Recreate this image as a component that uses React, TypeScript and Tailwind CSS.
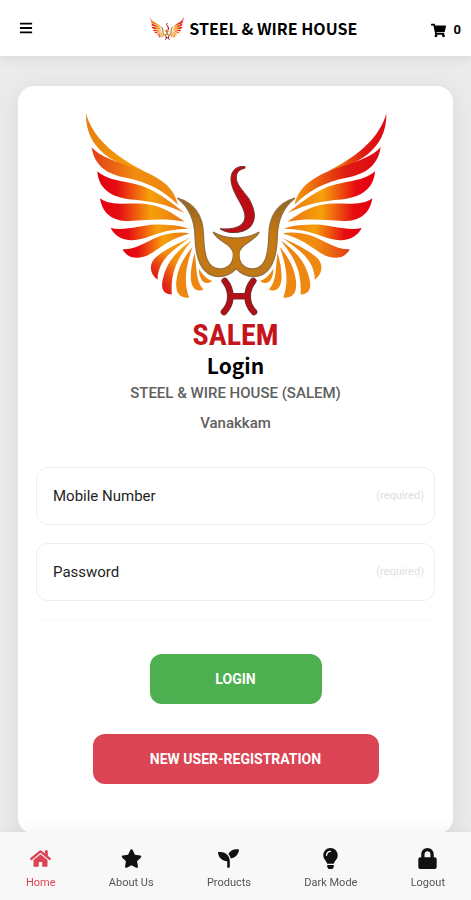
import React, { useId, useState } from 'react';
import { FaBars, FaHome, FaLightbulb, FaLock, FaSeedling, FaShoppingCart, FaStar } from 'react-icons/fa';

const feathers = [
  { d: 'M30 28 C48 95 105 152 207 203 C120 184 28 140 30 28Z', left: 'amber', right: 'crimson' },
  { d: 'M47 130 C90 176 180 184 240 220 C285 245 300 275 306 303 C265 262 215 234 150 222 C85 209 55 180 47 130Z', left: 'ember', right: 'crimson' },
  { d: 'M64 202 C110 240 160 226 222 256 C262 276 292 300 327 328 C270 300 220 291 165 287 C105 280 68 255 64 202Z', left: 'fire', right: 'fire' },
  { d: 'M72 283 C115 313 170 290 235 305 C275 316 298 334 327 354 C270 342 220 348 160 352 C110 352 80 330 72 283Z', left: 'fire', right: 'fire' },
  { d: 'M104 373 C150 382 190 364 240 362 C280 362 310 364 338 375 C290 375 250 387 210 402 C160 418 122 408 104 373Z', left: 'fire', right: 'fire' },
  { d: 'M140 437 C190 437 220 405 265 393 C300 384 320 385 342 389 C300 400 270 418 240 440 C205 467 160 474 140 437Z', left: 'fire', right: 'ember' },
  { d: 'M245 528 C218 507 220 478 241 460 C270 436 305 420 343 402 C300 435 247 462 245 528Z', left: 'ruby', right: 'gold' },
  { d: 'M288 573 C258 570 254 550 263 519 C275 470 310 436 347 410 C310 458 283 500 288 573Z', left: 'ruby', right: 'gold' },
  { d: 'M340 582 C308 584 298 565 302 530 C307 490 325 460 350 430 C334 480 320 528 340 582Z', left: 'gold', right: 'gold' },
  { d: 'M383 558 C358 568 344 548 345 518 C345 494 350 472 357 448 C364 492 358 530 383 558Z', left: 'gold', right: 'gold' },
  { d: 'M410 532 C390 546 377 534 373 518 C370 508 369 503 370 495 C382 516 394 525 410 532Z', left: 'gold', right: 'gold' },
];

const bodyHalf =
  'M305 283 C355 298 381 335 383 390 C385 455 393 494 432 496 C457 496 474 480 473 450 C470 420 432 418 412 385 C438 400 460 403 482 403 L482 495 C468 510 450 519 428 519 C380 516 360 470 358 400 C357 345 338 308 305 283Z';

function Logo({ className }: { className: string }) {
  const id = useId();
  const fill = (name: string) => `url(#${id}${name})`;

  return (
    <svg className={className} viewBox="0 0 962 645" aria-hidden="true">
      <defs>
        <linearGradient id={`${id}amber`} x1="0" y1="0" x2="1" y2="1">
          <stop offset="0" stopColor="#e87a10" />
          <stop offset="1" stopColor="#f5a00a" />
        </linearGradient>
        <linearGradient id={`${id}crimson`}>
          <stop offset="0" stopColor="#dc0814" />
          <stop offset="0.4" stopColor="#e01a12" />
          <stop offset="1" stopColor="#f29a0c" />
        </linearGradient>
        <linearGradient id={`${id}ember`}>
          <stop offset="0" stopColor="#e33a16" />
          <stop offset="0.5" stopColor="#f08c10" />
          <stop offset="1" stopColor="#ef8a10" />
        </linearGradient>
        <linearGradient id={`${id}fire`}>
          <stop offset="0" stopColor="#e6000f" />
          <stop offset="0.22" stopColor="#e60c12" />
          <stop offset="0.6" stopColor="#f6a00a" />
          <stop offset="1" stopColor="#ea7414" />
        </linearGradient>
        <linearGradient id={`${id}ruby`} x1="0" y1="1" x2="0.7" y2="0">
          <stop offset="0" stopColor="#dd0c14" />
          <stop offset="0.25" stopColor="#e43514" />
          <stop offset="0.6" stopColor="#f18c10" />
          <stop offset="1" stopColor="#f5a010" />
        </linearGradient>
        <linearGradient id={`${id}gold`} x1="0" y1="1" x2="1" y2="0">
          <stop offset="0" stopColor="#f0890e" />
          <stop offset="1" stopColor="#ec8314" />
        </linearGradient>
        <linearGradient id={`${id}bronze`} x1="0" y1="0" x2="0" y2="1">
          <stop offset="0" stopColor="#8f6228" />
          <stop offset="0.45" stopColor="#c8780f" />
          <stop offset="1" stopColor="#c07818" />
        </linearGradient>
      </defs>

      {feathers.map((f) => (
        <path key={f.d} d={f.d} fill={fill(f.left)} />
      ))}
      <g transform="translate(963 0) scale(-1 1)">
        {feathers.map((f) => (
          <path key={f.d} d={f.d} fill={fill(f.right)} />
        ))}
      </g>

      {/* lion face */}
      <g fill={fill('bronze')} stroke="#94703c" strokeWidth="4">
        <path d={bodyHalf} />
        <path d={bodyHalf} transform="translate(963 0) scale(-1 1)" />
      </g>
      <path d="M472 405 H491 V492 H472Z" fill="#c5780f" />

      {/* tail and whiskers */}
      <path
        d="M508 188 C478 184 461 207 467 237 C474 277 511 312 508 342 C504 372 468 378 433 375 C455 392 504 391 525 368 C546 342 534 310 520 285 C500 257 481 242 482 219 C483 202 495 196 508 193Z"
        fill="#bd0d14"
        stroke="#713431"
        strokeWidth="3"
      />
      <path
        d="M447 532 C470 560 470 600 445 625 M533 532 C510 560 510 600 535 625 M464 578 H516"
        fill="none"
        stroke="#603536"
        strokeWidth="20"
        strokeLinecap="round"
      />
      <path
        d="M447 532 C470 560 470 600 445 625 M533 532 C510 560 510 600 535 625 M464 578 H516"
        fill="none"
        stroke="#b01018"
        strokeWidth="16"
        strokeLinecap="round"
      />
    </svg>
  );
}

const fields = [
  { id: 'mobile', label: 'Mobile Number', type: 'tel' },
  { id: 'password', label: 'Password', type: 'password' },
];

const tabs = [
  { label: 'Home', icon: FaHome },
  { label: 'About Us', icon: FaStar },
  { label: 'Products', icon: FaSeedling },
  { label: 'Dark Mode', icon: FaLightbulb },
  { label: 'Logout', icon: FaLock },
];

export default function App() {
  const [active, setActive] = useState('Home');

  return (
    <div className="min-h-screen bg-[#ebebeb] font-['Roboto',sans-serif] text-black">
      <header className="sticky top-0 z-10 flex h-14 items-center bg-white shadow-[0_2px_12px_rgba(0,0,0,0.09)]">
        <button type="button" aria-label="Menu" className="w-19 px-[19px] text-sm">
          <FaBars />
        </button>
        <div className="flex flex-1 items-center justify-center gap-1">
          <Logo className="w-9" />
          <span className="font-['Noto_Sans_CJK_SC',sans-serif] text-base font-bold whitespace-nowrap">
            STEEL &amp; WIRE HOUSE
          </span>
        </div>
        <a href="#cart" aria-label="Cart" className="flex items-center gap-2 pt-1 pr-2.5 text-[13px] font-bold">
          <FaShoppingCart className="text-[15px]" />
          <span>0</span>
        </a>
      </header>

      <main className="px-[18px] pt-[30px] pb-[66px]">
        <form
          className="flex flex-col items-center rounded-2xl bg-white px-[18px] pt-[18px] pb-[50px] shadow-[0_4px_24px_rgba(0,0,0,0.08)]"
          onSubmit={(e) => e.preventDefault()}
        >
          <Logo className="w-80" />
          <p className="font-['Roboto_Condensed','Roboto',sans-serif] text-3xl leading-8 font-bold text-[#c4151c]">
            SALEM
          </p>
          <h1 className="font-['Noto_Sans_CJK_SC',sans-serif] text-[21px] leading-7 font-bold">Login</h1>
          <p className="mt-0.5 text-[15px] leading-6 font-medium text-[#606060]">STEEL &amp; WIRE HOUSE (SALEM)</p>
          <p className="mt-1.5 text-[15px] leading-6 font-medium text-[#606060]">Vanakkam</p>

          <div className="mt-8 flex w-full flex-col gap-[18px] border-b border-[#fafafa] pb-[18px]">
            {fields.map((field) => (
              <div key={field.id} className="flex h-[58px] items-center rounded-xl border border-[#eeeeee] pt-0.5 pr-2.5 pl-4">
                <label htmlFor={field.id} className="text-[15px] text-[#1f1f1f]">
                  {field.label}
                </label>
                <input id={field.id} type={field.type} required className="h-full min-w-0 flex-1 px-3 text-[15px] outline-none" />
                <span className="text-[11px] text-[#dedede]">(required)</span>
              </div>
            ))}
          </div>

          <button type="submit" className="mt-[34px] h-[50px] w-[172px] rounded-xl bg-[#4caf50] text-sm font-bold text-white">
            LOGIN
          </button>
          <button type="button" className="mt-[30px] h-[50px] w-[286px] rounded-xl bg-[#da4453] text-sm font-bold text-white">
            NEW USER-REGISTRATION
          </button>
        </form>
      </main>

      <nav className="fixed inset-x-0 bottom-0 flex h-[68px] justify-between bg-[#f8f8f8] px-[26px] shadow-[0_-2px_14px_rgba(0,0,0,0.05)]">
        {tabs.map(({ label, icon: Icon }) => (
          <button
            key={label}
            type="button"
            onClick={() => setActive(label)}
            className={`flex flex-col items-center gap-2 pt-4 ${active === label ? 'text-[#da4453]' : 'text-[#555555]'}`}
          >
            <Icon className={`text-[21px] ${active === label ? '' : 'text-[#111111]'}`} />
            <span className="text-[11px] leading-3">{label}</span>
          </button>
        ))}
      </nav>
    </div>
  );
}
